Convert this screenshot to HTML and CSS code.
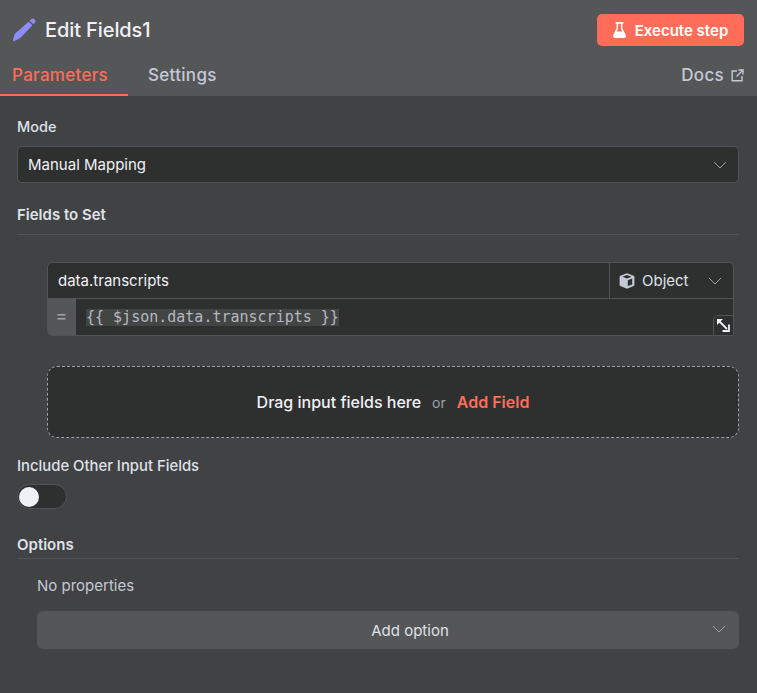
FILE: index.html
```html
<!DOCTYPE html>
<html lang="en">
<head>
  <meta charset="UTF-8" />
  <meta name="viewport" content="width=device-width, initial-scale=1">
  <title>Edit Fields1</title>
  <link rel="stylesheet" href="styles.css">
</head>
<body>

  <header class="panel-head">
    <div class="title-row">
      <div class="node-title">
        <svg class="pencil" width="24" height="24" viewBox="0 0 24 24"><path fill="#8c8cff" d="M19.2 1.2c.9-.9 2.3-.9 3.1-.1l.6.6c.8.8.8 2.2 0 3l-1.5 1.6-3.8-3.6zM16.6 3.7l3.8 3.6L8.3 20c-.3.3-.6.5-1 .6l-5.4 2.6c-.6.2-1.2-.3-1-.9l1.7-5.9c.1-.4.3-.7.6-1z"/></svg>
        <span>Edit Fields1</span>
      </div>
      <button class="run-btn">
        <svg width="13" height="16" viewBox="0 0 13 16"><path fill="#fff" d="M2.6 0h7.8v1.7H9.4v4.2l3.3 7.2c.6 1.3-.2 2.9-1.6 2.9H1.900C.5 16-.3 14.4 .3 13.1l3.3-7.200V1.700h-1zM5.100 1.700v4.700L3.800 9.400h5.400L7.900 6.400V1.700z"/></svg>
        Execute step
      </button>
    </div>
    <nav class="tabs">
      <a class="tab active">Parameters</a>
      <a class="tab">Settings</a>
      <a class="tab docs">Docs
        <svg width="13" height="13" viewBox="0 0 13 13" fill="none" stroke="#c3c9d5" stroke-width="1.4"><path d="M6 2H1.200v9.800H11V7M7.500 1h4.500v4.500M12 1 5.500 7.500"/></svg>
      </a>
    </nav>
  </header>

  <main class="params">
    <label class="field-label first">Mode</label>
    <div class="select">
      <span>Manual Mapping</span>
      <svg class="chev" width="14" height="8" viewBox="0 0 14 8" fill="none" stroke="#9da2ab" stroke-width="1"><path d="M1 1l6 6 6-6"/></svg>
    </div>

    <div class="section-title fields-title">Fields to Set</div>

    <div class="assignment">
      <div class="assign-top">
        <div class="assign-name">data.transcripts</div>
        <div class="assign-type">
          <svg width="16" height="16" viewBox="0 0 16 16"><path fill="#c3c9d5" fill-rule="evenodd" d="M8 .3l6.700 2.500c.4.2.7.5.7 1v8.300c0 .4-.3.8-.7 1L8 15.700l-6.700-2.600c-.4-.2-.7-.6-.7-1V3.800c0-.5.3-.8.7-1zM8.800 7.200v5.900l4.400-1.700V5.500zM3.400 3.800 8 5.600l4.600-1.800L8 2.100z"/></svg>
          <span>Object</span>
          <svg class="chev" width="14" height="8" viewBox="0 0 14 8" fill="none" stroke="#9da2ab" stroke-width="1"><path d="M1 1l6 6 6-6"/></svg>
        </div>
      </div>
      <div class="assign-value">
        <div class="eq">=</div>
        <div class="expr"><span>{{ $json.data.transcripts }}</span></div>
      </div>
      <div class="expand">
        <svg width="13" height="13" viewBox="0 0 13 13" fill="none" stroke="#f0f1f6" stroke-width="1.8"><path d="M2.500 2.500l7.500 7.500"/><path fill="#f0f1f6" stroke="none" d="M0 0h6L0 6z"/><path d="M12 5.500V12H5.500"/></svg>
      </div>
    </div>

    <div class="dropzone">
      <span class="drop-text">Drag input fields here</span>
      <span class="drop-or">or</span>
      <span class="drop-add">Add Field</span>
    </div>

    <label class="field-label include">Include Other Input Fields</label>
    <div class="switch"><div class="knob"></div></div>

    <div class="section-title options-title">Options</div>
    <div class="options">
      <div class="no-props">No properties</div>
      <div class="add-option">
        <span>Add option</span>
        <svg class="chev" width="14" height="8" viewBox="0 0 14 8" fill="none" stroke="#9da2ab" stroke-width="1"><path d="M1 1l6 6 6-6"/></svg>
      </div>
    </div>
  </main>

</body>
</html>
```

FILE: styles.css
```css
* {
  box-sizing: border-box;
}
body {
  margin: 0;
  height: 693px;
  overflow: hidden;
  font-family: Inter, "Liberation Sans", sans-serif;
  font-size: 15px;
  background: #414244;
  color: #f0f1f6;
}
.panel-head {
  height: 96px;
  background: #555658;
  display: flex;
  flex-direction: column;
}
.title-row {
  height: 56px;
  padding: 14px 13px 0 12px;
  display: flex;
  justify-content: space-between;
  align-items: flex-start;
}
.node-title {
  display: flex;
  align-items: center;
  gap: 9px;
  height: 32px;
  font-size: 20px;
  font-weight: 500;
  letter-spacing: -0.1px;
}
.run-btn {
  width: 147px;
  height: 32px;
  border: 0;
  border-radius: 5px;
  background: #ff6d5a;
  color: #fff;
  font: 600 15px Inter, sans-serif;
  display: flex;
  align-items: center;
  justify-content: center;
  gap: 9px;
}
.tabs {
  flex: 1;
  display: flex;
  align-items: stretch;
  font-size: 17px;
  font-weight: 500;
  letter-spacing: 0.3px;
  color: #c3c9d5;
}
.tab {
  display: flex;
  align-items: center;
  width: 128px;
  padding: 0 0 2px 12px;
  height: 40px;
}
.tab + .tab {
  width: auto;
  padding-left: 20px;
}
.tab.active {
  color: #ff6d5a;
  border-bottom: 2px solid #ff6d5a;
  padding-bottom: 0;
}
.tab.docs {
  margin-left: auto;
  padding: 0 13px 2px 0;
  gap: 7px;
}
.params {
  padding: 0 18px 0 17px;
}
.field-label {
  display: block;
  font-weight: 500;
  line-height: 17px;
  color: #dfe1e8;
}
.field-label.first {
  padding-top: 22px;
  font-size: 14.5px;
}
.select {
  height: 37px;
  margin-top: 11px;
  padding: 0 11px 0 10px;
  display: flex;
  align-items: center;
  justify-content: space-between;
  background: #2e302f;
  border: 1px solid #525356;
  border-radius: 5px;
}
.section-title {
  font-weight: 600;
  line-height: 17px;
  color: #dfe1e8;
  border-bottom: 1px solid #525356;
}
.fields-title {
  margin-top: 23px;
  padding-bottom: 11px;
}
.assignment {
  position: relative;
  margin: 27px 5px 0 30px;
  height: 74px;
  background: #2e302f;
  border: 1px solid #525356;
  border-radius: 5px;
}
.assign-top {
  height: 36px;
  display: flex;
  border-bottom: 1px solid #525356;
}
.assign-name {
  flex: 1;
  padding-left: 10px;
  line-height: 35px;
}
.assign-type {
  width: 124px;
  border-left: 1px solid #525356;
  display: flex;
  align-items: center;
  padding: 0 11px 0 9px;
  gap: 7px;
  color: #dfe1e8;
}
.assign-type .chev {
  margin-left: auto;
}
.assign-value {
  height: 36px;
  display: flex;
}
.eq {
  width: 28px;
  padding-right: 1px;
  background: #555658;
  border-bottom-left-radius: 4px;
  color: #9da2ab;
  font-size: 18px;
  text-align: center;
  line-height: 34px;
}
.expr {
  flex: 1;
  padding: 10px 0 0 10px;
  font-family: "DejaVu Sans Mono", "Liberation Mono", monospace;
  font-size: 15px;
  line-height: 17px;
  color: #b4b8c0;
}
.expr span {
  background: #434544;
  display: inline-block;
}
.expand {
  position: absolute;
  right: -1px;
  bottom: -1px;
  width: 21px;
  height: 21px;
  background: #2e302f;
  border: 1px solid #525356;
  border-top-left-radius: 5px;
  display: flex;
  align-items: center;
  justify-content: center;
}
.dropzone {
  margin: 30px 0 0 30px;
  height: 72px;
  background: #2e302f;
  border: 1px dashed #9da2ab;
  border-radius: 10px;
  display: flex;
  align-items: center;
  justify-content: center;
  font-size: 16px;
  font-weight: 500;
}
.drop-or {
  margin: 0 11px;
  font-size: 14px;
  font-weight: 400;
  color: #9da2ab;
}
.drop-add {
  color: #ff6d5a;
  font-weight: 600;
}
.field-label.include {
  margin-top: 20px;
  font-size: 14.85px;
}
.switch {
  width: 50px;
  height: 25px;
  margin-top: 9px;
  padding: 2px 1px;
  background: #2e302f;
  border: 1px solid #525356;
  border-radius: 13px;
}
.knob {
  width: 20px;
  height: 20px;
  border-radius: 50%;
  background: #f0f1f6;
}
.options-title {
  margin-top: 27px;
  padding-bottom: 5px;
}
.options {
  padding-left: 20px;
}
.no-props {
  margin-top: 18px;
  line-height: 17px;
  color: #c3c9d5;
}
.add-option {
  position: relative;
  height: 38px;
  margin-top: 17px;
  padding-left: 44px;
  background: #555658;
  border-radius: 6px;
  display: flex;
  align-items: center;
  justify-content: center;
  color: #dfe1e8;
}
.add-option .chev {
  position: absolute;
  right: 13px;
  top: 14px;
}
```
